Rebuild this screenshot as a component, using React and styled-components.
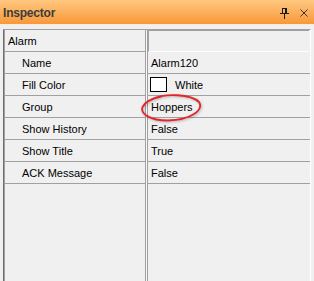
import React from "react";
import styled, { createGlobalStyle } from "styled-components";

const Global = createGlobalStyle`
  html, body, #root { margin: 0; padding: 0; height: 100%; }
  body { background: #f0f0f0; font-family: "Liberation Sans", Arial, sans-serif; font-size: 11px; color: #000; overflow: hidden; }
`;

const Window = styled.div`
  position: relative;
  width: 314px;
  height: 281px;
  display: flex;
  flex-direction: column;
  background: #f0f0f0;
`;

const TitleBar = styled.div`
  height: 24px;
  flex: none;
  display: flex;
  align-items: center;
  padding: 0 6px 0 3px;
  background: linear-gradient(#ffc880, #f8983a);
  border-bottom: 1px solid #fde9d4;
`;

const Title = styled.div`
  flex: 1;
  font-family: "Liberation Sans", Arial, sans-serif;
  font-weight: bold;
  font-size: 12px;
  letter-spacing: -0.2px;
  color: #3c3c3c;
  padding-top: 1px;
`;

const TitleButtons = styled.div`
  display: flex;
  align-items: center;
  gap: 11px;
  padding-top: 2px;
`;

const Body = styled.div`
  flex: 1;
  display: flex;
  padding: 4px 3px 0 3px;
  min-height: 0;
`;

const Panel = styled.div`
  width: 308px;
  display: flex;
  border-top: 1px solid #a0a0a0;
  border-left: 1px solid #6e6e6e;
  border-right: 1px solid #ffffff;
`;

const LeftCol = styled.div`
  width: 140px;
  border-left: 1px solid #a0a0a0;
  border-right: 1px solid #a0a0a0;
  display: flex;
  flex-direction: column;
`;

const Gap = styled.div`
  width: 1px;
  background: #f8f8f8;
`;

const RightCol = styled.div`
  flex: 1;
  border-left: 1px solid #a0a0a0;
  display: flex;
  flex-direction: column;
`;

const Cell = styled.div`
  height: 21px;
  flex: none;
  display: flex;
  align-items: center;
  border-bottom: 1px solid #a0a0a0;
  padding-left: ${(p) => p.$indent}px;
  white-space: nowrap;
`;

const HeaderValue = styled.div`
  height: 20px;
  flex: none;
  border-top: 1px solid #a0a0a0;
  border-left: 1px solid #a0a0a0;
  border-bottom: 1px solid #ffffff;
  margin-right: 1px;
`;

const Swatch = styled.span`
  width: 15px;
  height: 13px;
  border: 1px solid #000;
  background: #fff;
  margin-right: 8px;
  margin-left: -1px;
`;

const Overlay = styled.svg`
  position: absolute;
  left: 0;
  top: 0;
  pointer-events: none;
  filter: drop-shadow(1px 1px 1px rgba(0, 0, 0, 0.25));
`;

const rows = [
  { label: "Name", value: "Alarm120" },
  { label: "Fill Color", value: "White", swatch: true },
  { label: "Group", value: "Hoppers" },
  { label: "Show History", value: "False" },
  { label: "Show Title", value: "True" },
  { label: "ACK Message", value: "False" },
];

function PinIcon() {
  return (
    <svg width="9" height="11" viewBox="0 0 9 11">
      <rect x="2.5" y="0.5" width="4" height="5" fill="none" stroke="#1a1a1a" />
      <rect x="5" y="0" width="2" height="6" fill="#1a1a1a" />
      <rect x="0" y="5" width="9" height="1" fill="#1a1a1a" />
      <rect x="4" y="6" width="1" height="5" fill="#1a1a1a" />
    </svg>
  );
}

function CloseIcon() {
  return (
    <svg width="8" height="8" viewBox="0 0 8 8">
      <path d="M0.5 0.5 L7.5 7.5 M7.5 0.5 L0.5 7.5" stroke="#333" strokeWidth="1" fill="none" />
    </svg>
  );
}

export default function App() {
  return (
    <Window>
      <Global />
      <TitleBar>
        <Title>Inspector</Title>
        <TitleButtons>
          <PinIcon />
          <CloseIcon />
        </TitleButtons>
      </TitleBar>
      <Body>
        <Panel>
          <LeftCol>
            <Cell $indent={3}>Alarm</Cell>
            {rows.map((r) => (
              <Cell key={r.label} $indent={17}>
                {r.label}
              </Cell>
            ))}
          </LeftCol>
          <Gap />
          <RightCol>
            <HeaderValue />
            {rows.map((r) => (
              <Cell key={r.label} $indent={3}>
                {r.swatch && <Swatch />}
                {r.value}
              </Cell>
            ))}
          </RightCol>
        </Panel>
      </Body>
      <Overlay width="314" height="281" viewBox="0 0 314 281">
        <path
          d="M152 99 C 165 93, 191 94, 199 102 C 204 110, 191 120, 168 120.5 C 150 120.5, 140 114, 142.5 107 C 145 102, 152 98.5, 161 96.5"
          fill="none"
          stroke="#e3262b"
          strokeWidth="1.8"
          strokeLinecap="round"
        />
      </Overlay>
    </Window>
  );
}
